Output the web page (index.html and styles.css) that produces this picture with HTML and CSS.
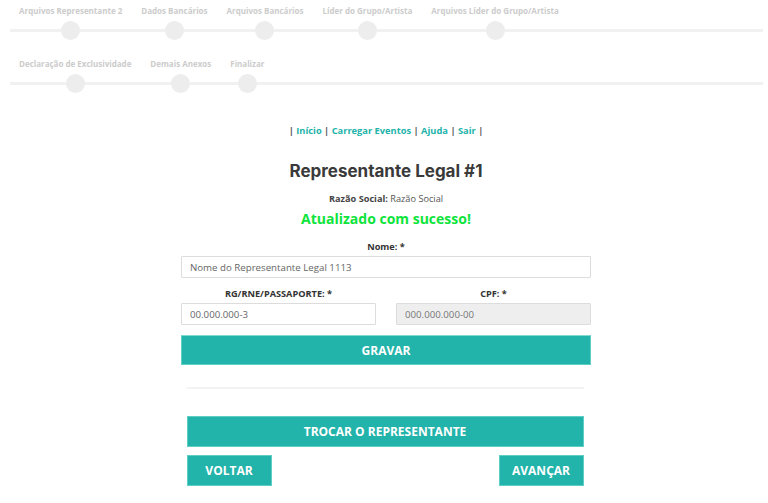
FILE: index.html
```html
<!DOCTYPE html>
<html lang="pt-BR">
<head>
<meta charset="utf-8">
<title>Representante Legal</title>
<link rel="stylesheet" href="styles.css">
</head>
<body>
<div class="stepper">
  <div class="step-row">
    <div class="step"><span class="step-label">Arquivos Representante 2</span><span class="dot"></span></div>
    <div class="step"><span class="step-label">Dados Bancários</span><span class="dot"></span></div>
    <div class="step"><span class="step-label">Arquivos Bancários</span><span class="dot"></span></div>
    <div class="step"><span class="step-label">Líder do Grupo/Artista</span><span class="dot"></span></div>
    <div class="step"><span class="step-label">Arquivos Líder do Grupo/Artista</span><span class="dot"></span></div>
  </div>
  <div class="step-row">
    <div class="step"><span class="step-label">Declaração de Exclusividade</span><span class="dot"></span></div>
    <div class="step"><span class="step-label">Demais Anexos</span><span class="dot"></span></div>
    <div class="step"><span class="step-label">Finalizar</span><span class="dot"></span></div>
  </div>
</div>

<main class="main">
  <nav class="topnav">| <a href="#">Início</a> | <a href="#">Carregar Eventos</a> | <a href="#">Ajuda</a> | <a href="#">Sair</a> |</nav>

  <h1 class="title">Representante Legal #1</h1>
  <p class="razao"><strong>Razão Social:</strong> Razão Social</p>
  <p class="success">Atualizado com sucesso!</p>

  <form class="form">
    <div class="field">
      <label class="label">Nome: *</label>
      <input class="input" type="text" value="Nome do Representante Legal 1113">
    </div>
    <div class="field-row">
      <div class="field">
        <label class="label">RG/RNE/PASSAPORTE: *</label>
        <input class="input" type="text" value="00.000.000-3">
      </div>
      <div class="field">
        <label class="label">CPF: *</label>
        <input class="input input-disabled" type="text" value="000.000.000-00" disabled>
      </div>
    </div>
    <button class="btn btn-full btn-gravar" type="button">GRAVAR</button>
  </form>

  <div class="actions">
    <hr class="divider">
    <button class="btn btn-full btn-big" type="button">TROCAR O REPRESENTANTE</button>
    <div class="nav-buttons">
      <button class="btn btn-big btn-voltar" type="button">VOLTAR</button>
      <button class="btn btn-big btn-avancar" type="button">AVANÇAR</button>
    </div>
  </div>
</main>
</body>
</html>
```

FILE: styles.css
```css
* { box-sizing: border-box; }

html, body {
  margin: 0;
  padding: 0;
  background: #fff;
}

body {
  font-family: "Open Sans", "Liberation Sans", sans-serif;
  color: #333;
}

/* ---------- stepper ---------- */
.stepper {
  padding: 0 5px 0 10px;
}

.step-row {
  display: flex;
  padding-top: 5px;
  height: 53px;
  background: linear-gradient(#f1f1f1, #f1f1f1) no-repeat;
  background-size: 100% 3px;
  background-position: 0 29px;
}

.step {
  display: flex;
  flex-direction: column;
  align-items: center;
  padding: 0 10px 0 9px;
  gap: 4px;
}

.step-label {
  font-size: 8px;
  font-weight: 700;
  line-height: 12px;
  color: #cccccc;
  white-space: nowrap;
}

.dot {
  width: 19px;
  height: 19px;
  border-radius: 50%;
  background: #ededed;
}

/* ---------- main ---------- */
.main {
  padding-left: 4px;
  display: flex;
  flex-direction: column;
  align-items: center;
}

.topnav {
  margin-top: 18px;
  font-size: 9.3px;
  font-weight: 700;
  line-height: 14px;
  color: #555;
}

.topnav a {
  color: #22b3aa;
  text-decoration: none;
}

.title {
  margin: 22px 0 0;
  font-family: "Inter", "Open Sans", sans-serif;
  font-weight: 700;
  font-size: 17px;
  line-height: 22px;
  color: #3a3a3a;
}

.razao {
  margin: 10px 0 0;
  font-size: 9.2px;
  line-height: 14px;
  color: #555;
}

.razao strong {
  color: #444;
}

.success {
  margin: 4px 0 0;
  font-size: 14px;
  font-weight: 700;
  line-height: 18px;
  color: #0ee43b;
}

/* ---------- form ---------- */
.form {
  width: 410px;
  margin-top: 13px;
  display: flex;
  flex-direction: column;
}

.field {
  display: flex;
  flex-direction: column;
  flex: 1;
}

.field-row {
  display: flex;
  gap: 20px;
  margin-top: 10px;
}

.label {
  text-align: center;
  font-size: 9.2px;
  font-weight: 700;
  line-height: 12px;
  color: #333;
  margin-bottom: 3px;
}

.input {
  height: 22px;
  border: 1px solid #dcdcdc;
  border-radius: 1px;
  padding: 0 8px;
  font-family: "Open Sans", "Liberation Sans", sans-serif;
  font-size: 9.7px;
  color: #666;
  background: #fff;
}

.input-disabled {
  background: #eeeeee;
  color: #777;
}

.btn {
  border: 1px solid #5fcfc6;
  background: #22b3aa;
  color: #fff;
  font-family: "Open Sans", "Liberation Sans", sans-serif;
  font-weight: 700;
  padding: 0;
  cursor: pointer;
}

.btn-full {
  width: 100%;
}

.btn-gravar {
  height: 30px;
  margin-top: 10px;
  font-size: 12px;
  border-top-color: #7fdad3;
}

/* ---------- bottom actions ---------- */
.actions {
  width: 397px;
  margin-top: 22px;
  margin-right: 2px;
  display: flex;
  flex-direction: column;
}

.divider {
  margin: 0;
  border: 0;
  height: 2px;
  background: #f3f3f3;
}

.btn-big {
  height: 31px;
  font-size: 12px;
  margin-top: 27px;
}

.nav-buttons {
  display: flex;
  justify-content: space-between;
  margin-top: 8px;
}

.nav-buttons .btn-big {
  margin-top: 0;
}

.btn-voltar {
  width: 85px;
}

.btn-avancar {
  width: 85px;
}
```
